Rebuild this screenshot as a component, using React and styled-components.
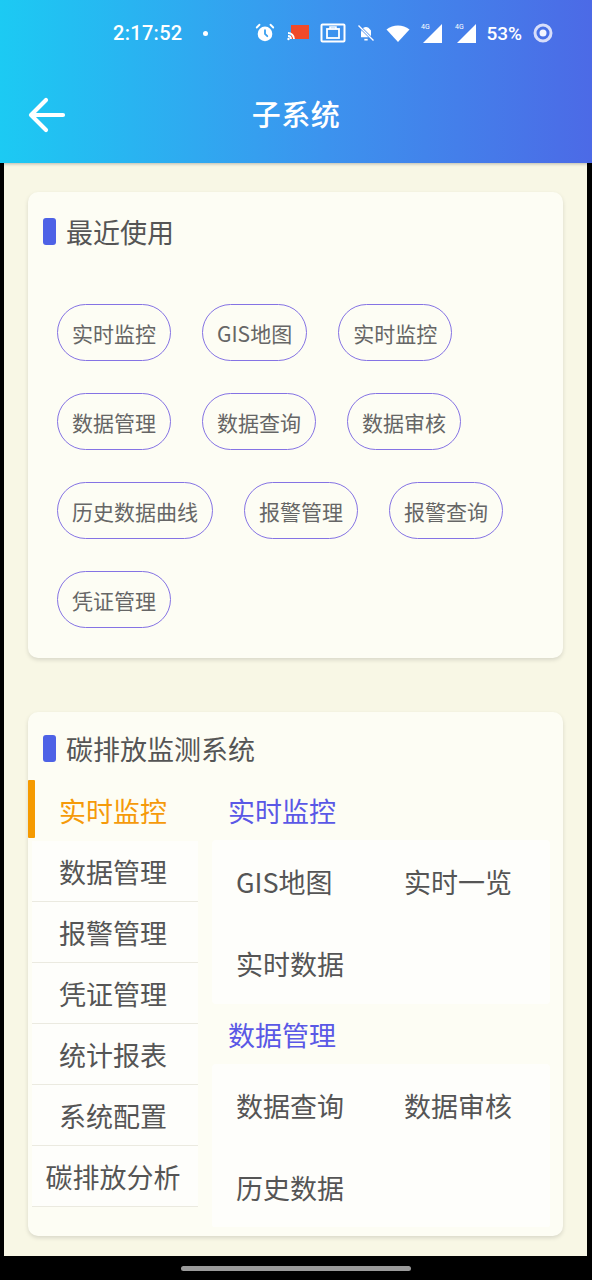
import React from 'react';
import styled, { createGlobalStyle } from 'styled-components';

const GlobalStyle = createGlobalStyle`
  html, body {
    margin: 0;
    padding: 0;
    background: #000;
  }
  * {
    box-sizing: border-box;
  }
  body {
    font-family: "Noto Sans CJK SC", "Noto Sans", Roboto, sans-serif;
  }
`;

const recent = [
  '实时监控',
  'GIS地图',
  '实时监控',
  '数据管理',
  '数据查询',
  '数据审核',
  '历史数据曲线',
  '报警管理',
  '报警查询',
  '凭证管理',
];

const menu = ['实时监控', '数据管理', '报警管理', '凭证管理', '统计报表', '系统配置', '碳排放分析'];

const groups = [
  { title: '实时监控', items: ['GIS地图', '实时一览', '实时数据'] },
  { title: '数据管理', items: ['数据查询', '数据审核', '历史数据'] },
];

const AlarmIcon = () => (
  <svg width="22" height="22" viewBox="0 0 24 24" fill="none">
    <circle cx="12" cy="13" r="8" fill="#fff" />
    <path d="M12 9v4l2.5 2.5" stroke="#3aa0f0" strokeWidth="2" strokeLinecap="round" />
    <path d="M3 6l3-3M21 6l-3-3" stroke="#fff" strokeWidth="2" strokeLinecap="round" />
  </svg>
);

const CastIcon = () => (
  <svg width="24" height="20" viewBox="0 0 24 20" fill="none">
    <rect x="5" y="2" width="18" height="14" fill="#f04a2a" />
    <path d="M2 10a6 6 0 0 1 6 6M2 13a3 3 0 0 1 3 3" stroke="#fff" strokeWidth="1.8" />
    <circle cx="2.5" cy="16" r="1.2" fill="#fff" />
  </svg>
);

const SaverIcon = () => (
  <svg width="26" height="20" viewBox="0 0 26 20" fill="none">
    <rect x="1.5" y="1.5" width="23" height="17" rx="1" stroke="#fff" strokeWidth="2" />
    <rect x="7" y="6" width="12" height="9" stroke="#fff" strokeWidth="1.8" />
    <path d="M10 6V4h6v2" stroke="#fff" strokeWidth="1.5" />
  </svg>
);

const BellOffIcon = () => (
  <svg width="20" height="20" viewBox="0 0 24 24" fill="none">
    <path d="M6 17V11a6 6 0 0 1 9-5.2L18 9v8H6z" fill="#fff" />
    <path d="M10 20h4" stroke="#fff" strokeWidth="2" />
    <path d="M3 3l18 18" stroke="#3d86ec" strokeWidth="3" />
    <path d="M3 3l18 18" stroke="#fff" strokeWidth="1.6" />
  </svg>
);

const WifiIcon = () => (
  <svg width="24" height="20" viewBox="0 0 24 20">
    <path d="M12 19L0.5 6.5C7 1 17 1 23.5 6.5z" fill="#fff" />
  </svg>
);

const SignalIcon = () => (
  <svg width="24" height="22" viewBox="0 0 24 22">
    <text x="1" y="7" fontSize="7" fill="#fff" fontFamily="Roboto, sans-serif">4G</text>
    <path d="M22 2v19H3z" fill="#fff" />
  </svg>
);

const BatteryRing = () => (
  <svg width="22" height="22" viewBox="0 0 22 22" fill="none">
    <circle cx="11" cy="11" r="8" stroke="#d8defa" strokeWidth="3" />
    <circle cx="11" cy="11" r="3.5" fill="#f4f6ff" />
  </svg>
);

const BackArrow = () => (
  <svg width="40" height="40" viewBox="0 0 40 40" fill="none">
    <path d="M36 20H5M19 5L4 20l15 15" stroke="#fff" strokeWidth="4.2" strokeLinecap="round" strokeLinejoin="round" />
  </svg>
);

const App = () => {
  return (
    <>
      <GlobalStyle />
      <Phone>
        <Header>
          <StatusBar>
            <Time>2:17:52</Time>
            <Dot />
            <StatusIcons>
              <AlarmIcon />
              <CastIcon />
              <SaverIcon />
              <BellOffIcon />
              <WifiIcon />
              <SignalIcon />
              <SignalIcon />
              <Battery>53%</Battery>
              <BatteryRing />
            </StatusIcons>
          </StatusBar>
          <TitleBar>
            <BackButton>
              <BackArrow />
            </BackButton>
            <PageTitle>子系统</PageTitle>
          </TitleBar>
        </Header>

        <Content>
          <Card>
            <CardTitle>最近使用</CardTitle>
            <ChipList>
              {recent.map((name, i) => (
                <Chip key={i}>{name}</Chip>
              ))}
            </ChipList>
          </Card>

          <Card $tight>
            <CardTitle>碳排放监测系统</CardTitle>
            <SystemBody>
              <SideMenu>
                {menu.map((name, i) => (
                  <MenuItem key={name} $active={i === 0}>
                    {name}
                  </MenuItem>
                ))}
              </SideMenu>
              <Panel>
                {groups.map((g) => (
                  <React.Fragment key={g.title}>
                    <GroupTitle>{g.title}</GroupTitle>
                    <GroupBox>
                      {g.items.map((item) => (
                        <GroupItem key={item}>{item}</GroupItem>
                      ))}
                    </GroupBox>
                  </React.Fragment>
                ))}
              </Panel>
            </SystemBody>
          </Card>
        </Content>

        <NavBar>
          <HomePill />
        </NavBar>
      </Phone>
    </>
  );
};

const Phone = styled.div`
  width: 592px;
  height: 1280px;
  display: flex;
  flex-direction: column;
  background: #000;
  overflow: hidden;
`;

const Header = styled.header`
  height: 163px;
  flex-shrink: 0;
  background: linear-gradient(90deg, #1ccaf3 0%, #3c93ee 55%, #4c6ae6 100%);
  box-shadow: 0 1px 3px rgba(0, 0, 0, 0.25);
  position: relative;
  z-index: 1;
  display: flex;
  flex-direction: column;
`;

const StatusBar = styled.div`
  height: 66px;
  display: flex;
  align-items: center;
  padding: 0 38px 0 113px;
  color: #fff;
`;

const Time = styled.span`
  font-family: Roboto, "Noto Sans", sans-serif;
  font-size: 20px;
  font-weight: 500;
  letter-spacing: 0.3px;
`;

const Dot = styled.span`
  width: 5px;
  height: 5px;
  border-radius: 50%;
  background: #fff;
  margin-left: 21px;
`;

const StatusIcons = styled.div`
  margin-left: auto;
  display: flex;
  align-items: center;
  gap: 10px;
`;

const Battery = styled.span`
  font-family: Roboto, "Noto Sans", sans-serif;
  font-size: 19px;
  font-weight: 500;
  margin-left: -2px;
`;

const TitleBar = styled.div`
  flex: 1;
  display: flex;
  align-items: center;
  justify-content: center;
  position: relative;
  padding-bottom: 4px;
`;

const BackButton = styled.div`
  position: absolute;
  left: 27px;
  top: 29px;
  display: flex;
`;

const PageTitle = styled.h1`
  margin: 0;
  color: #fff;
  font-size: 29px;
  font-weight: 500;
  letter-spacing: 0.5px;
`;

const Content = styled.main`
  flex: 1;
  margin: 0 5px 0 4px;
  background: #f8f7e5;
  padding: 29px 24px 0;
  display: flex;
  flex-direction: column;
  gap: 54px;
  overflow: hidden;
`;

const Card = styled.section`
  background: #fdfdf4;
  border-radius: 10px;
  box-shadow: 0 2px 4px rgba(0, 0, 0, 0.13);
  padding: ${(p) => (p.$tight ? '19px 0 9px' : '22px 0 30px')};
  overflow: hidden;
`;

const CardTitle = styled.h2`
  margin: 0 0 0 15px;
  height: 34px;
  display: flex;
  align-items: center;
  font-size: 27px;
  font-weight: 400;
  color: #555;

  &::before {
    content: '';
    width: 13px;
    height: 27px;
    border-radius: 3px;
    background: #4e62e6;
    margin-right: 10px;
  }
`;

const ChipList = styled.div`
  display: flex;
  flex-wrap: wrap;
  gap: 32px 31px;
  padding: 56px 29px 0;
`;

const Chip = styled.span`
  height: 57px;
  padding: 0 14px;
  display: inline-flex;
  align-items: center;
  border: 1.5px solid #8573e4;
  border-radius: 29px;
  font-size: 21px;
  color: #666;
  white-space: nowrap;
`;

const SystemBody = styled.div`
  margin-top: 15px;
  height: 447px;
  display: flex;
  gap: 14px;
`;

const SideMenu = styled.ul`
  list-style: none;
  margin: 0;
  padding: 0;
  width: 170px;
  flex-shrink: 0;
`;

const MenuItem = styled.li`
  height: 61px;
  display: flex;
  align-items: center;
  justify-content: center;
  font-size: 27px;
  color: ${(p) => (p.$active ? '#f59a0a' : '#555')};
  background: ${(p) => (p.$active ? 'transparent' : '#fefefb')};
  position: relative;
  margin-left: ${(p) => (p.$active ? '0' : '4px')};
  padding-right: ${(p) => (p.$active ? '0' : '4px')};
  border-bottom: ${(p) => (p.$active ? 'none' : '1px solid #ebeae0')};

  &::before {
    content: '';
    display: ${(p) => (p.$active ? 'block' : 'none')};
    position: absolute;
    left: 0;
    top: 0;
    width: 7px;
    height: 58px;
    background: #f59a00;
    border-radius: 1px;
  }
`;

const Panel = styled.div`
  flex: 1;
  margin-right: 13px;
  overflow: hidden;
`;

const GroupTitle = styled.div`
  height: 60px;
  display: flex;
  align-items: center;
  padding-left: 16px;
  font-size: 27px;
  color: #5a58e6;
`;

const GroupBox = styled.div`
  display: grid;
  grid-template-columns: 168px 1fr;
  grid-auto-rows: 82px;
  padding-left: 24px;
  background: #fefefb;
  border-radius: 4px;
`;

const GroupItem = styled.div`
  display: flex;
  align-items: center;
  font-size: 27px;
  color: #555;
`;

const NavBar = styled.div`
  height: 24px;
  flex-shrink: 0;
  display: flex;
  justify-content: center;
  align-items: center;
  background: #000;
`;

const HomePill = styled.div`
  width: 230px;
  height: 5px;
  border-radius: 3px;
  background: #9a9a9a;
`;

export default App;
